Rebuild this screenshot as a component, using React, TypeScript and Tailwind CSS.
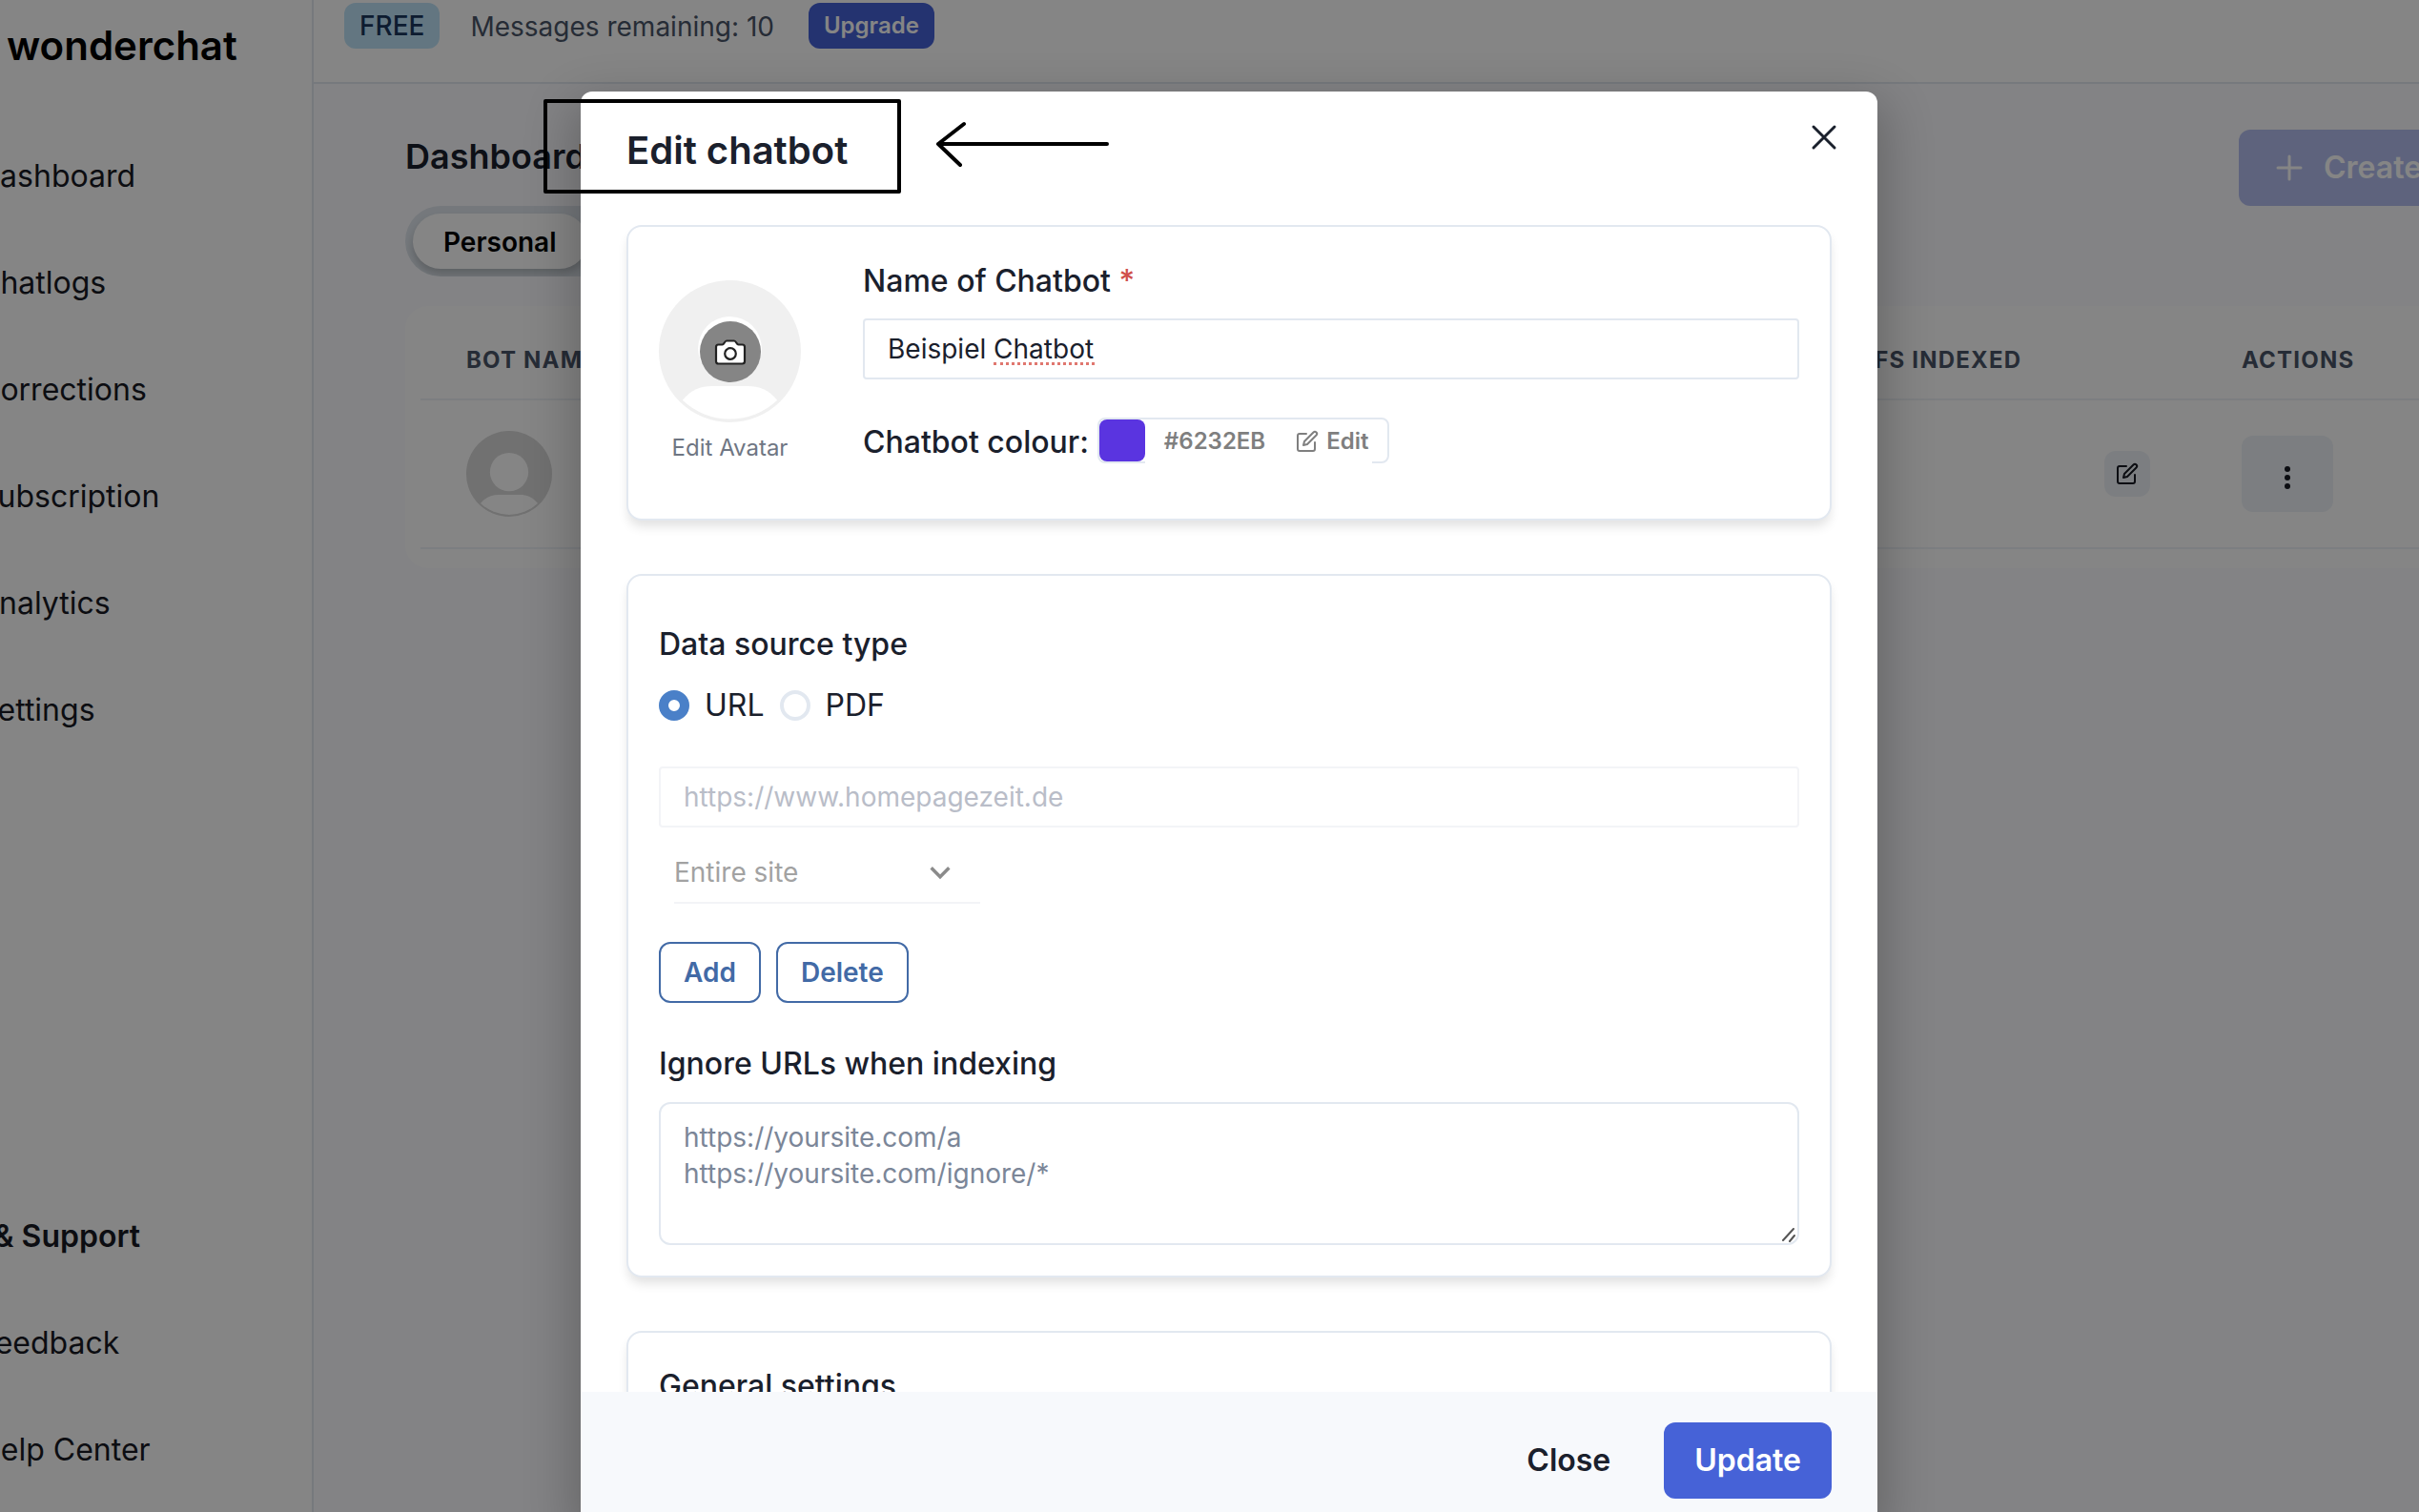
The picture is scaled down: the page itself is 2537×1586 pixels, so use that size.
import React from "react";
import { FiEdit } from "react-icons/fi";

const mainLinks = ["Dashboard", "Chatlogs", "Corrections", "Subscription", "Analytics", "Settings"];
const helpLinks = ["Feedback", "Help Center"];

function Avatar({ className, fill, person }: { className: string; fill: string; person: string }) {
  return (
    <svg viewBox="0 0 96 96" className={className} aria-hidden="true">
      <circle cx="48" cy="48" r="48" fill={fill} />
      <circle cx="48" cy="46" r="21.5" fill={person} />
      <path d="M16 81 C22 74 28 71.5 36 71.5 H60 C68 71.5 74 74 80 81 A46.5 46.5 0 0 1 16 81 Z" fill={person} />
    </svg>
  );
}

function Sidebar() {
  return (
    <aside className="-ml-16 flex w-[393px] shrink-0 flex-col border-r-2 border-[#e2e8f0] bg-white pl-[41px] text-[32px] leading-[48px] text-[#171923]">
      <div className="pt-4 pl-[30px] text-[42px] font-semibold leading-[64px] text-black">wonderchat</div>
      <nav className="mt-[81px] flex flex-col gap-16">
        {mainLinks.map((text) => (
          <a key={text} href="#" className="block whitespace-nowrap">{text}</a>
        ))}
      </nav>
      <nav className="mt-auto flex flex-col gap-16 pb-[41px]">
        <span className="mr-[180px] flex justify-end whitespace-nowrap font-semibold">Help &amp; Support</span>
        {helpLinks.map((text) => (
          <a key={text} href="#" className="block whitespace-nowrap">{text}</a>
        ))}
      </nav>
    </aside>
  );
}

function Dashboard() {
  return (
    <div className="flex min-w-0 flex-1 flex-col bg-[#fcfcff]">
      <header className="flex h-[88px] items-start gap-8 border-b-2 border-[#e2e8f0] bg-white pt-[3px] pl-8">
        <span className="flex h-12 items-center rounded-xl bg-[#bee3f8] px-4 text-[28px] font-medium text-[#1a365d]">FREE</span>
        <span className="pr-1 text-[28px] leading-[50px] text-[#4a5568]">Messages remaining: 10</span>
        <button type="button" className="h-12 rounded-xl bg-[#4662d7] px-4 text-2xl font-semibold text-white">Upgrade</button>
      </header>
      <main className="pt-12 pl-24">
        <div className="flex h-20 items-center justify-between">
          <h1 className="pb-6 text-[36px] font-semibold leading-[48px] text-[#1a202c]">Dashboard</h1>
          <button type="button" className="-mr-16 flex h-20 w-[253px] shrink-0 items-center gap-[22px] rounded-xl bg-[#b5bfef] pl-[39px] text-[32px] font-semibold whitespace-nowrap text-white">
            <svg viewBox="0 0 28 28" className="size-7 shrink-0" fill="none" stroke="currentColor" strokeWidth="3" strokeLinecap="round" aria-hidden="true"><path d="M14 2V26M2 14H26" /></svg>
            Create chatbot
          </button>
        </div>
        <div className="inline-flex overflow-hidden rounded-full bg-[#e0e7ee] p-2">
          <button type="button" className="h-[58px] rounded-full bg-white px-8 pt-px text-[28px] font-semibold text-black shadow-[0_6px_10px_rgba(0,0,0,0.2)]">Personal</button>
          <button type="button" className="h-[58px] px-8 pt-px text-[28px] font-semibold text-black">Team</button>
        </div>
        <div className="mt-[31px] rounded-l-3xl bg-white pt-4 pb-5 pl-4">
          <table className="w-full table-fixed text-left">
            <thead>
              <tr className="h-[82px] border-b-2 border-[#edf2f7] text-2xl font-bold tracking-wider text-[#4a5568]">
                <th className="w-[1490px] pl-12">BOT NAME</th>
                <th className="w-[372px] whitespace-nowrap">PDFS INDEXED</th>
                <th className="pl-12">ACTIONS</th>
              </tr>
            </thead>
            <tbody>
              <tr className="h-[156px] border-b-2 border-[#edf2f7]">
                <td className="pl-12"><Avatar className="size-[90px]" fill="#d8d8d8" person="#ffffff" /></td>
                <td>
                  <button type="button" aria-label="Edit sources" className="mr-12 ml-auto flex size-12 items-center justify-center rounded-xl bg-[#edf2f7] text-[#171923]">
                    <FiEdit className="size-6" />
                  </button>
                </td>
                <td className="pl-12">
                  <button type="button" aria-label="More actions" className="flex h-20 w-24 items-center justify-center rounded-xl bg-[#edf2f7]">
                    <svg viewBox="0 0 32 32" className="mt-2 size-8" fill="#171923"><circle cx="16" cy="7" r="3" /><circle cx="16" cy="16" r="3" /><circle cx="16" cy="25" r="3" /></svg>
                  </button>
                </td>
              </tr>
            </tbody>
          </table>
        </div>
      </main>
    </div>
  );
}

const card = "shrink-0 rounded-2xl border-2 border-[#e2e8f0] bg-white px-8 shadow-[0_8px_12px_-2px_rgba(0,0,0,0.12)]";
const field = "block h-16 w-full rounded border-2 px-6 text-[28px]";
const outline = "h-16 rounded-xl border-2 border-[#426aa6] px-6 text-[28px] font-semibold text-[#426aa6]";
const label = "block text-[32px] font-medium leading-[48px]";

function EditDialog() {
  return (
    <div role="dialog" aria-label="Edit chatbot" className="relative flex h-full w-[1360px] flex-col rounded-t-xl bg-white text-[#1a202c] shadow-[0_20px_50px_10px_rgba(0,0,0,0.22)]">
      <div className="flex items-start justify-between px-12 pt-8">
        <h2 className="text-[40px] font-semibold leading-[60px]">Edit chatbot</h2>
        <button type="button" aria-label="Close dialog" className="-mr-2 flex size-8 items-center justify-center">
          <svg viewBox="0 0 32 32" className="size-8" fill="none" stroke="#1a202c" strokeWidth="3" strokeLinecap="round"><path d="M5 5 27 27M27 5 5 27" /></svg>
        </button>
      </div>
      <div className="flex min-h-0 flex-1 flex-col gap-14 overflow-hidden px-12 pt-12">
        <section className={card + " flex h-[310px] gap-[65px]"}>
          <div className="flex w-[149px] shrink-0 flex-col items-center pt-14">
            <div className="relative">
              <Avatar className="size-[149px]" fill="#f0f0f0" person="#ffffff" />
              <button type="button" aria-label="Change avatar" className="absolute inset-0 m-auto flex size-16 items-center justify-center rounded-full bg-[#858585]">
                <svg viewBox="0 0 34 34" className="size-[34px]" fill="#fff" stroke="#222" strokeWidth="2.2" strokeLinejoin="round" aria-hidden="true">
                  <path d="M4.500 9.500H8.500C10.500 9.500 11 5.500 13 5.500H21C23 5.500 23.500 9.500 25.500 9.500H29.500Q32 9.500 32 12V27Q32 29.500 29.500 29.500H4.500Q2 29.500 2 27V12Q2 9.500 4.500 9.500Z" />
                  <circle cx="17" cy="19" r="5.8" />
                </svg>
              </button>
            </div>
            <span className="mt-2 text-2xl leading-[38px] text-[#6f7683]">Edit Avatar</span>
          </div>
          <div className="min-w-0 flex-1 pt-[33px]">
            <label htmlFor="bot-name" className={label}>Name of Chatbot <span className="text-[#d0504a]">*</span></label>
            <div className="relative mt-[15px]">
              <input id="bot-name" defaultValue="Beispiel Chatbot" className={field + " border-[#e2e8f0]"} />
              <span aria-hidden="true" className="absolute top-[46px] left-[137px] w-[106px] border-b-3 border-dotted border-[#e0776f]" />
            </div>
            <div className="mt-[38px] flex items-center gap-[9px]">
              <span className={label + " pt-1"}>Chatbot colour:</span>
              <div className="flex h-12 rounded-lg border-2 border-[#e2e8f0] text-2xl font-semibold text-[#7f7f7f]">
                <span className="h-11 w-12 rounded-lg bg-[#5a34e0]" />
                <span className="mr-4 flex h-[46px] items-center bg-white pl-5">
                  #6232EB
                  <button type="button" className="mr-1 ml-8 flex items-center gap-2"><FiEdit className="size-6" />Edit</button>
                </span>
              </div>
            </div>
          </div>
        </section>

        <section className={card + " h-[738px] pt-12"}>
          <fieldset>
            <legend className={label}>Data source type</legend>
            <div className="mt-4 flex items-center gap-4 text-[32px] leading-[48px]">
              <input id="src-url" type="radio" name="source" defaultChecked className="size-8 appearance-none rounded-full border-[10px] border-[#4a80c8] bg-white" />
              <label htmlFor="src-url">URL</label>
              <input id="src-pdf" type="radio" name="source" className="size-8 appearance-none rounded-full border-4 border-[#e2e8f0] bg-white" />
              <label htmlFor="src-pdf">PDF</label>
            </div>
          </fieldset>
          <input aria-label="Source URL" disabled placeholder="https://www.homepagezeit.de" className={field + " mt-10 border-[#f3f4f7] placeholder:text-[#b9bdc8]"} />
          <div className="mt-4 ml-4 flex h-16 w-[321px] items-center border-b-2 border-[#f3f4f7]">
            <select aria-label="Scope" disabled className="w-full appearance-none text-[28px] text-[#a2a2a2]"><option>Entire site</option></select>
            <svg viewBox="0 0 24 24" className="mr-7 size-7 shrink-0" fill="none" stroke="#8b8b8b" strokeWidth="3"><path d="m4 8 8 8 8-8" /></svg>
          </div>
          <div className="mt-10 flex gap-4">
            <button type="button" className={outline}>Add</button>
            <button type="button" className={outline}>Delete</button>
          </div>
          <label htmlFor="ignore" className={label + " mt-10"}>Ignore URLs when indexing</label>
          <div className="relative mt-4">
            <textarea id="ignore" placeholder={"https://yoursite.com/a\nhttps://yoursite.com/ignore/*"} className="block h-[150px] w-full resize-none rounded-xl border-2 border-[#e2e8f0] px-6 py-4 text-[28px] leading-[38px] placeholder:text-[#7b8698]" />
            <svg viewBox="0 0 16 16" className="absolute right-[3px] bottom-[3px] size-4" fill="none" stroke="#555" strokeWidth="2" strokeLinecap="round" aria-hidden="true"><path d="M2 14 13 2M9 15 14 9" /></svg>
          </div>
        </section>

        <section className={card + " h-[400px] pt-8"}>
          <h3 className={label}>General settings</h3>
        </section>
      </div>
      <div className="flex h-[126px] shrink-0 items-start justify-end bg-[#f7f9fc] px-12 pt-8 text-[32px] font-semibold">
        <button type="button" className="mr-6 h-20 px-8">Close</button>
        <button type="button" className="h-20 rounded-xl bg-[#4662d7] px-8 text-white">Update</button>
      </div>
    </div>
  );
}

export default function App() {
  return (
    <div className="relative h-screen overflow-hidden font-['Inter',sans-serif]">
      <div className="flex h-full">
        <Sidebar />
        <Dashboard />
      </div>
      <div className="absolute inset-0 flex justify-center bg-black/48 pt-24 pl-[41px]">
        <EditDialog />
      </div>
      <div className="absolute top-[104px] left-[570px] h-[99px] w-[375px] rounded-xs border-4 border-black" />
      <svg viewBox="0 0 184 50" className="absolute top-[126px] left-[980px] h-[50px] w-[184px]" fill="none" stroke="#000" strokeWidth="4" strokeLinecap="round" strokeLinejoin="round"><path d="M181 25H4M31 4 4 25 27 47" /></svg>
    </div>
  );
}
